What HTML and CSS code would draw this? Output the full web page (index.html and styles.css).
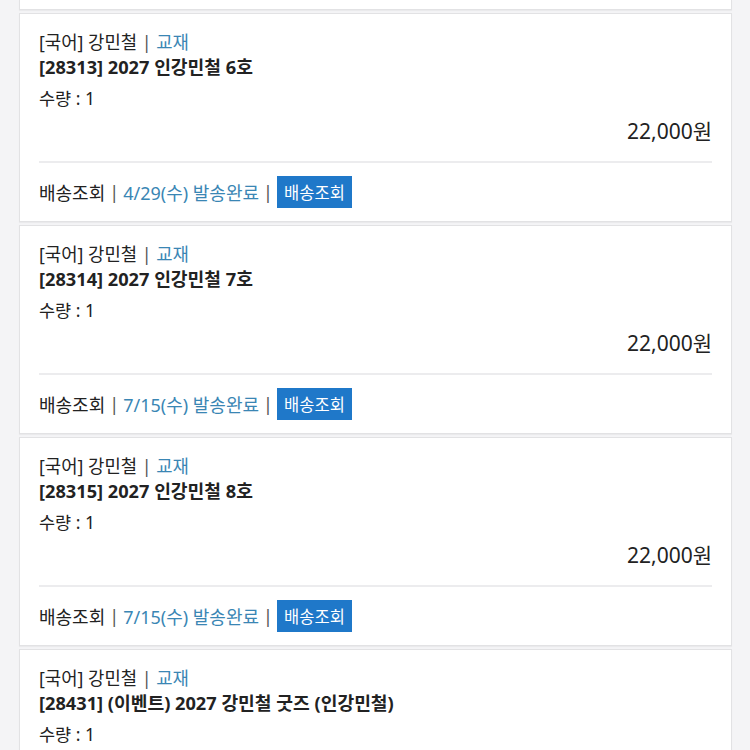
FILE: index.html
```html
<!DOCTYPE html>
<html lang="ko">
<head>
    <meta charset="UTF-8">
    <meta name="viewport" content="width=device-width, initial-scale=1.0">
    <title>주문 상세</title>
    <link rel="stylesheet" href="styles.css">
</head>
<body>
    <div class="order-list">
        <div class="card card-tail"></div>

        <div class="card">
            <div class="item-info">
                <p class="category">[국어] 강민철 <span class="bar">|</span> <span class="link">교재</span></p>
                <p class="title">[28313] 2027 인강민철 6호</p>
                <p class="qty">수량 : 1</p>
                <p class="price">22,000원</p>
            </div>
            <div class="delivery">
                <span>배송조회</span>
                <span class="bar">|</span>
                <span class="link">4/29(수) 발송완료</span>
                <span class="bar">|</span>
                <button class="track-button">배송조회</button>
            </div>
        </div>

        <div class="card">
            <div class="item-info">
                <p class="category">[국어] 강민철 <span class="bar">|</span> <span class="link">교재</span></p>
                <p class="title">[28314] 2027 인강민철 7호</p>
                <p class="qty">수량 : 1</p>
                <p class="price">22,000원</p>
            </div>
            <div class="delivery">
                <span>배송조회</span>
                <span class="bar">|</span>
                <span class="link">7/15(수) 발송완료</span>
                <span class="bar">|</span>
                <button class="track-button">배송조회</button>
            </div>
        </div>

        <div class="card">
            <div class="item-info">
                <p class="category">[국어] 강민철 <span class="bar">|</span> <span class="link">교재</span></p>
                <p class="title">[28315] 2027 인강민철 8호</p>
                <p class="qty">수량 : 1</p>
                <p class="price">22,000원</p>
            </div>
            <div class="delivery">
                <span>배송조회</span>
                <span class="bar">|</span>
                <span class="link">7/15(수) 발송완료</span>
                <span class="bar">|</span>
                <button class="track-button">배송조회</button>
            </div>
        </div>

        <div class="card">
            <div class="item-info">
                <p class="category">[국어] 강민철 <span class="bar">|</span> <span class="link">교재</span></p>
                <p class="title">[28431] (이벤트) 2027 강민철 굿즈 (인강민철)</p>
                <p class="qty">수량 : 1</p>
                <p class="price">22,000원</p>
            </div>
            <div class="delivery">
                <span>배송조회</span>
                <span class="bar">|</span>
                <span class="link">7/15(수) 발송완료</span>
                <span class="bar">|</span>
                <button class="track-button">배송조회</button>
            </div>
        </div>
    </div>
</body>
</html>
```

FILE: styles.css
```css
body {
    font-family: "Noto Sans", "Noto Sans CJK KR", sans-serif;
    background-color: #f4f4f6;
    margin: 0;
    padding: 0;
    color: #222;
    font-size: 18px;
}
.order-list {
    padding: 0 18px 0 19px;
    display: flex;
    flex-direction: column;
    gap: 3px;
}
.card {
    background: #fff;
    border: 1px solid #e2e2e4;
    box-shadow: 0 1px 1px rgba(0, 0, 0, 0.04);
}
.card-tail {
    height: 9px;
    border-top: none;
}
.item-info {
    padding: 16px 19px 0 19px;
}
.item-info p {
    margin: 0;
    line-height: 25px;
}
.category {
    font-size: 17.8px;
}
.title {
    font-size: 18.2px;
    font-weight: bold;
}
.qty {
    font-size: 17.5px;
    margin-top: 6px !important;
}
.price {
    margin-top: 8px !important;
    text-align: right;
    font-size: 21px;
    padding-bottom: 17px;
    border-bottom: 2px solid #ececee;
}
.bar {
    color: #555;
}
.link {
    color: #3a86b4;
}
.delivery {
    padding: 0 19px;
    height: 58px;
    display: flex;
    align-items: center;
    gap: 4px;
}
.track-button {
    background-color: #1f78c9;
    color: white;
    border: none;
    font-family: inherit;
    font-size: 16.5px;
    height: 32px;
    width: 75px;
    padding: 0;
}
```
